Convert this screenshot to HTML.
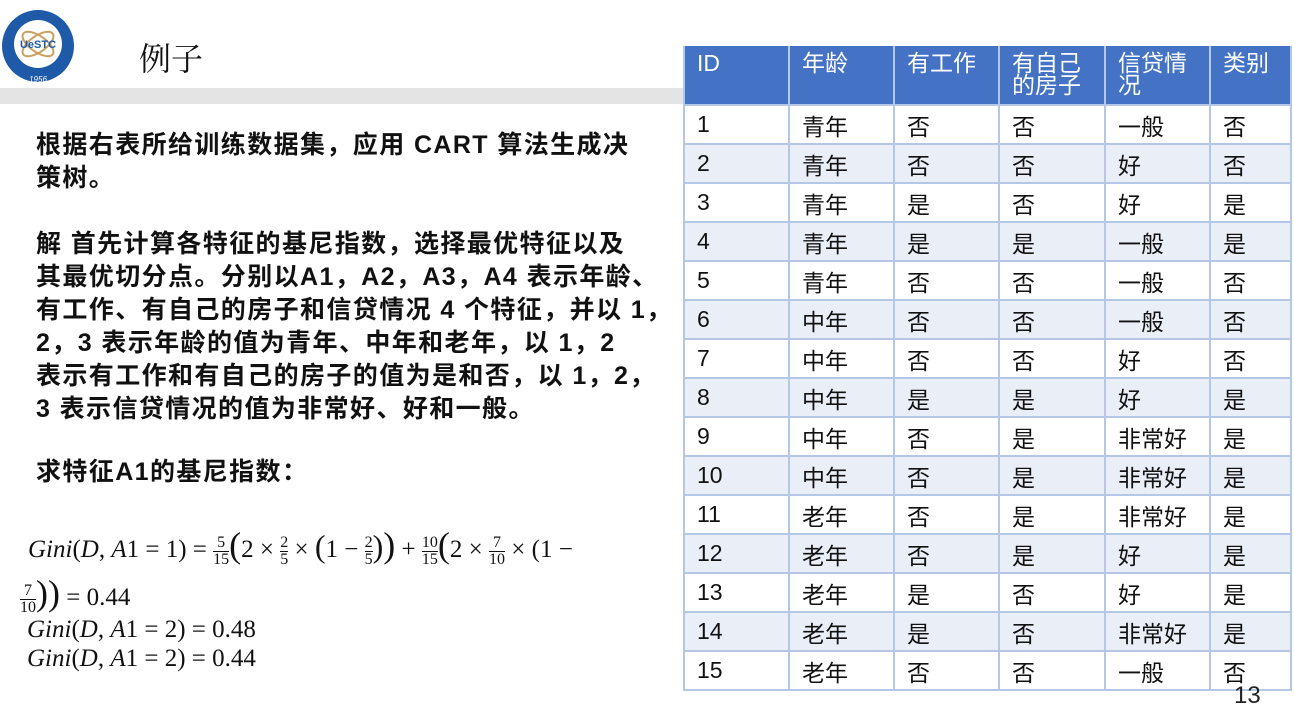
<!DOCTYPE html>
<html><head><meta charset="utf-8"><style>
body{margin:0;width:1294px;height:706px;background:#fff;position:relative;overflow:hidden;font-family:"Liberation Sans","Noto Sans CJK SC",sans-serif}
.band{position:absolute;left:0;top:88px;width:684px;height:16px;background:#e4e4e4}
.title{position:absolute;left:139px;top:34px;font-size:32px;font-family:"Noto Serif CJK SC","Noto Sans CJK SC",serif;color:#111}
.txt{position:absolute;left:36px;font-size:25px;letter-spacing:1.4px;font-weight:bold;line-height:33px;color:#111;white-space:nowrap}
table{position:absolute;left:683px;top:46px;border-collapse:collapse;border:2px solid #4472c4}
td{border:2px solid #b4c7e7;height:39px;padding:0 0 0 12px;font-size:23px;vertical-align:middle;color:#111;box-sizing:border-box}
tr.h td{background:#4472c4;color:#fff;height:58px;vertical-align:top;padding-top:4px;line-height:22px;border-color:#b4c7e7;border-top:none}
tr:nth-child(odd):not(.h) td{background:#e9eef7}
.m{position:absolute;font-family:"Liberation Serif",serif;font-size:25px;color:#111;white-space:nowrap}
.fr{display:inline-block;vertical-align:middle;text-align:center;font-size:16px;line-height:16px}
.fr span{display:block}
.fr span:first-child{border-bottom:1px solid #111}
</style></head><body>
<svg style="position:absolute;left:0;top:0" width="76" height="92" viewBox="0 0 76 92">
<circle cx="38" cy="46" r="36" fill="#1e5aa8"/><circle cx="38" cy="44" r="24" fill="#fff"/>
<ellipse cx="38" cy="44" rx="18" ry="8" fill="none" stroke="#c9a060" stroke-width="2" transform="rotate(-35 38 44)"/>
<ellipse cx="38" cy="44" rx="18" ry="8" fill="none" stroke="#c9a060" stroke-width="2" transform="rotate(35 38 44)"/>
<text x="38" y="48" font-size="11" font-weight="bold" fill="#1e5aa8" text-anchor="middle" font-family="Liberation Sans">UeSTC</text>
<text x="38" y="82" font-size="8" fill="#fff" text-anchor="middle" font-style="italic">1956</text>
</svg>
<div class="band"></div>
<div class="title">例子</div>
<div class="txt" style="top:129px">根据右表所给训练数据集，应用 CART 算法生成决<br>策树。</div>
<div class="txt" style="top:228px">解 首先计算各特征的基尼指数，选择最优特征以及<br>其最优切分点。分别以A1，A2，A3，A4 表示年龄、<br>有工作、有自己的房子和信贷情况 4 个特征，并以 1，<br>2，3 表示年龄的值为青年、中年和老年，以 1，2<br>表示有工作和有自己的房子的值为是和否，以 1，2，<br>3 表示信贷情况的值为非常好、好和一般。</div>
<div class="txt" style="top:456px">求特征A1的基尼指数：</div>
<div class="m" style="left:28px;top:524px"><i>Gini</i>(<i>D</i>, <i>A</i>1 = 1) = <span class="fr"><span>5</span><span>15</span></span><span style="font-size:36px">(</span>2 × <span class="fr"><span>2</span><span>5</span></span> × <span style="font-size:32px">(</span>1 − <span class="fr"><span>2</span><span>5</span></span><span style="font-size:32px">)</span><span style="font-size:36px">)</span> + <span class="fr"><span>10</span><span>15</span></span><span style="font-size:36px">(</span>2 × <span class="fr"><span>7</span><span>10</span></span> × (1 −</div>
<div class="m" style="left:20px;top:572px"><span class="fr"><span>7</span><span>10</span></span><span style="font-size:36px">))</span> = 0.44</div>
<div class="m" style="left:27px;top:616px"><i>Gini</i>(<i>D</i>, <i>A</i>1 = 2) = 0.48</div>
<div class="m" style="left:27px;top:645px"><i>Gini</i>(<i>D</i>, <i>A</i>1 = 2) = 0.44</div>
<table>
<tr class="h"><td style="width:105px">ID</td><td style="width:105px">年龄</td><td style="width:105px">有工作</td><td style="width:106px">有自己<br>的房子</td><td style="width:105px">信贷情<br>况</td><td style="width:81px">类别</td></tr>
<tr><td>1</td><td>青年</td><td>否</td><td>否</td><td>一般</td><td>否</td></tr>
<tr><td>2</td><td>青年</td><td>否</td><td>否</td><td>好</td><td>否</td></tr>
<tr><td>3</td><td>青年</td><td>是</td><td>否</td><td>好</td><td>是</td></tr>
<tr><td>4</td><td>青年</td><td>是</td><td>是</td><td>一般</td><td>是</td></tr>
<tr><td>5</td><td>青年</td><td>否</td><td>否</td><td>一般</td><td>否</td></tr>
<tr><td>6</td><td>中年</td><td>否</td><td>否</td><td>一般</td><td>否</td></tr>
<tr><td>7</td><td>中年</td><td>否</td><td>否</td><td>好</td><td>否</td></tr>
<tr><td>8</td><td>中年</td><td>是</td><td>是</td><td>好</td><td>是</td></tr>
<tr><td>9</td><td>中年</td><td>否</td><td>是</td><td>非常好</td><td>是</td></tr>
<tr><td>10</td><td>中年</td><td>否</td><td>是</td><td>非常好</td><td>是</td></tr>
<tr><td>11</td><td>老年</td><td>否</td><td>是</td><td>非常好</td><td>是</td></tr>
<tr><td>12</td><td>老年</td><td>否</td><td>是</td><td>好</td><td>是</td></tr>
<tr><td>13</td><td>老年</td><td>是</td><td>否</td><td>好</td><td>是</td></tr>
<tr><td>14</td><td>老年</td><td>是</td><td>否</td><td>非常好</td><td>是</td></tr>
<tr><td>15</td><td>老年</td><td>否</td><td>否</td><td>一般</td><td>否</td></tr>
</table>
<div style="position:absolute;left:1234px;top:682px;font-size:24px;color:#222">13</div>
</body></html>
